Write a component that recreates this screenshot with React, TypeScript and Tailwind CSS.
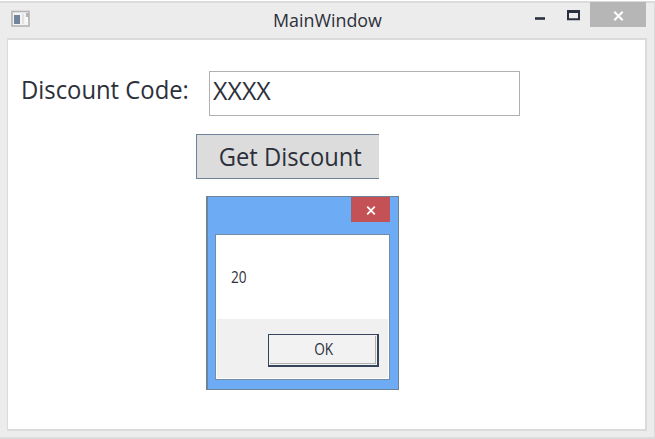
const font = "font-['Open_Sans','Noto_Sans',sans-serif]";

function Cross({ className }: { className: string }) {
  return (
    <svg viewBox="0 0 10 10" className={className} fill="none" stroke="white" strokeWidth="2">
      <path d="M0.8 0.8 9.2 9.2M9.2 0.8 0.8 9.2" />
    </svg>
  );
}

function TitleBar() {
  return (
    <header className="flex h-[35px] shrink-0 items-start pl-[11px]">
      <svg viewBox="0 0 20 18" className="mt-[7px] h-[18px] w-5">
        <rect x="1" y="1.5" width="17" height="14.5" fill="#f3f3f3" stroke="#b4b4b4" strokeWidth="1.6" />
        <rect x="3" y="5" width="6" height="9" fill="#72859c" />
        <path d="M12 4v10" stroke="#dcdcdc" strokeWidth="1.5" />
        <path d="M15 3h3v8h-3z" fill="#b4b4b4" />
        <path d="M15 7h2v5h-2z" fill="#fff" />
      </svg>
      <h1 className="ml-[242px] mt-[3px] w-[109px] origin-left scale-x-[0.94] whitespace-nowrap text-[19px] leading-7">MainWindow</h1>
      <svg viewBox="0 0 46 12" className="ml-[153px] mt-[6px] h-3 w-[46px]" fill="none" stroke="#2b3040">
        <path d="M0 9.5h10" strokeWidth="2.6" />
        <path d="M33 2v8.2h11V2" strokeWidth="2" />
        <path d="M32 2.5h13" strokeWidth="3" />
      </svg>
      <button className="-mt-px ml-[9px] flex h-[25px] w-14 items-center justify-center bg-[#b6b6b7]">
        <Cross className="mt-[2px] h-[10px] w-[11px]" />
      </button>
    </header>
  );
}

function MessageBox() {
  return (
    <section className="absolute left-[206px] top-[193px] flex h-[194px] w-[193px] flex-col border border-l-2 border-[#6d8497] bg-[#6dabf5] pb-[9px] pl-[7px] pr-2">
      <div className="flex h-[37px] shrink-0 justify-end">
        <button className="flex h-[25px] w-[39px] items-center justify-center border-l border-[#9b6269] bg-[#c35155]">
          <Cross className="mt-[2px] h-[9px] w-[10px]" />
        </button>
      </div>
      <div className="flex flex-1 flex-col border border-[#718da8] bg-white">
        <p className="flex h-[84px] items-center pb-px pl-[15px] text-[16px]">
          <span className="origin-left scale-x-[0.85]">20</span>
        </p>
        <div className="mx-px mb-px flex flex-1 items-start justify-end bg-[#f0f0f0] pr-[9px] pt-[15px]">
          <button className="h-[33px] w-[111px] border-b-2 border-l border-r-2 border-t border-[#35445c] bg-[#f2f2f2] p-px">
            <span className="flex h-full items-center justify-center border-b border-r border-[#b0b0b0] text-[15.5px]">
              <span className="scale-x-[0.88] pl-[2px]">OK</span>
            </span>
          </button>
        </div>
      </div>
    </section>
  );
}

export default function App() {
  return (
    <div className={`h-[439px] w-[655px] overflow-hidden bg-white pt-px text-[#2c303b] ${font}`}>
      <div className="relative flex h-[438px] flex-col border-b-2 border-r border-t-2 border-[#dbdbdb] bg-[#ececec]">
        <TitleBar />
        <main className="ml-[7px] mr-[7px] h-[393px] border-2 border-l border-[#dbdbdb] bg-white text-[25px]">
          <div className="flex pt-[31px]">
            <label className="w-[201px] whitespace-nowrap pl-[13px] leading-9">
              <span className="inline-block origin-left scale-x-[0.953]">Discount Code:</span>
            </label>
            <div className="h-[45px] w-[311px] whitespace-nowrap border border-[#b0b0b0] pl-[3px] leading-9">
              <span className="inline-block origin-left">XXXX</span>
            </div>
          </div>
          <button className="ml-[188px] mt-[18px] flex h-[45px] w-[183px] items-center justify-center whitespace-nowrap border-y border-l border-[#6d8199] bg-[#dcdcdc] pl-1 pt-px">
            <span className="scale-x-[0.95]">Get Discount</span>
          </button>
        </main>
        <MessageBox />
      </div>
    </div>
  );
}
